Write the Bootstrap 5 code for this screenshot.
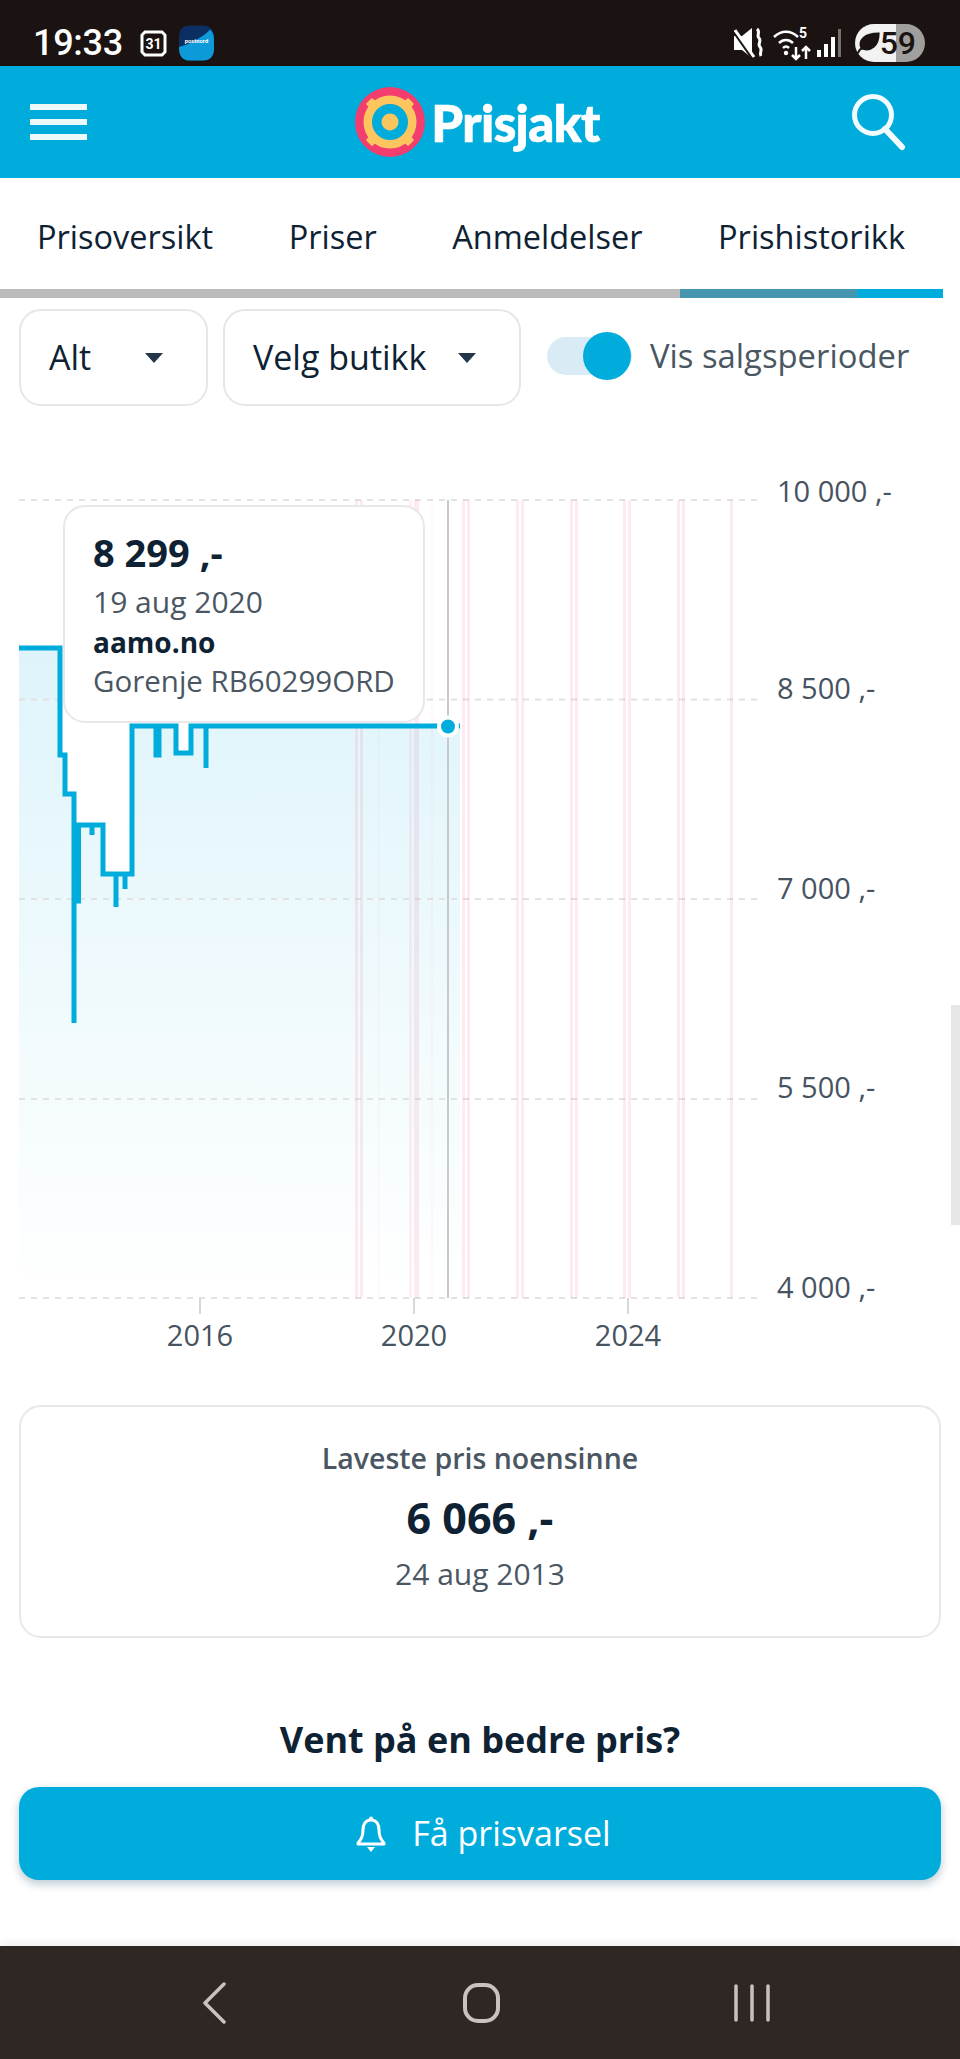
<!DOCTYPE html>
<html lang="nb">
<head>
  <meta charset="UTF-8" />
  <meta name="viewport" content="width=device-width, initial-scale=1.0"/>
  <title>Prisjakt | Prishistorikk</title>
  <link href="https://cdn.jsdelivr.net/npm/bootstrap@5.3.0/dist/css/bootstrap.min.css" rel="stylesheet"/>
  <style>
    body {
      font-family: "Open Sans", "Noto Sans", sans-serif;
      color: #0e2233;
      background-color: #fff;
    }
    .page-wrap {
      min-height: 2059px;
      position: relative;
      overflow: hidden;
    }
    .status-bar {
      height: 66px;
      background-color: #1a1311;
      color: #fff;
      padding: 20px 35px 0 33px;
      font-family: Roboto, sans-serif;
    }
    .status-time {
      font-size: 36px;
      font-weight: 500;
      letter-spacing: -.3px;
      margin-right: 17px;
    }
    .battery-pill {
      width: 70px;
      height: 38px;
      border-radius: 19px;
      background: linear-gradient(90deg, #f2f2f2 58%, #a19f9d 58%);
      color: #1a1311;
      font-size: 32px;
      font-weight: 500;
      margin-left: 13px;
      padding-right: 9px;
    }
    .app-head {
      height: 112px;
      background-color: #00acdc;
      padding: 0 51px 0 30px;
    }
    .burger-bar {
      display: block;
      width: 57px;
      height: 6px;
      background-color: #eef9fc;
      margin-bottom: 9px;
    }
    .burger-bar:last-child { margin-bottom: 0; }
    .logo-wrap { margin-left: 21px; }
    .logo-text {
      font-family: Lato, sans-serif;
      font-size: 51px;
      font-weight: 900;
      color: #fff;
      letter-spacing: -.6px;
      line-height: 1;
      margin-left: 6px;
      -webkit-text-stroke: .7px #fff;
    }
    .tab-row {
      height: 111px;
      padding: 8px 55px 0 37px;
      font-size: 32.5px;
      color: #0e2233;
    }
    .tab-strip { height: 9px; }
    .strip-grey { width: 680px; background-color: #bbb; }
    .strip-dark { width: 177px; background-color: #4696b0; }
    .strip-blue { width: 86px; background-color: #00acdc; }
    .filter-row { padding: 11px 0 0 19px; height: 108px; }
    .filter-btn {
      height: 97px;
      border: 2px solid #e4e6e8;
      border-radius: 22px;
      font-size: 34px;
      color: #0e2233;
      background: #fff;
      padding: 0 43px 0 28px;
      display: flex;
      align-items: center;
      justify-content: space-between;
    }
    .filter-btn::after {
      border-top: 10px solid #24374a;
      border-right: 9px solid transparent;
      border-left: 9px solid transparent;
      border-bottom: 0;
      margin: 0;
    }
    .btn-all { width: 189px; }
    .btn-shop { width: 298px; margin-left: 15px; }
    .sale-toggle {
      position: relative;
      width: 85px;
      height: 38px;
      border-radius: 19px;
      background-color: #d9ecf5;
      margin-left: 26px;
    }
    .sale-knob {
      position: absolute;
      right: 1px;
      top: -5px;
      width: 48px;
      height: 48px;
      border-radius: 50%;
      background-color: #00acdc;
    }
    .sale-label { font-size: 32.8px; color: #4a5763; margin-left: 18px; white-space: nowrap; }
    .chart-wrap { position: relative; height: 999px; }
    .chart-wrap svg { display: block; }
    .axis-text { font-family: "Open Sans", sans-serif; font-size: 29px; fill: #47535f; }
    .price-tip {
      position: absolute;
      left: 63px;
      top: 99px;
      width: 362px;
      height: 218px;
      background-color: #fff;
      border: 2px solid #e8e8ea;
      border-radius: 22px;
      padding: 0 28px;
    }
    .tip-price { font-size: 38px; font-weight: 700; line-height: 44px; margin-top: 23px; }
    .tip-date { font-size: 30px; color: #4a5763; line-height: 38px; margin-top: 9px; }
    .tip-shop { font-size: 28px; font-weight: 700; line-height: 38px; margin-top: 2px; }
    .tip-model { font-size: 29.5px; color: #4a5763; line-height: 38px; margin-top: 1px; white-space: nowrap; }
    .low-card {
      height: 233px;
      margin: 0 19px;
      border: 2px solid #e8e8ea;
      border-radius: 22px;
    }
    .low-title { font-size: 28.5px; font-weight: 600; color: #4a5763; line-height: 36px; margin-top: 33px; }
    .low-price { font-size: 43px; font-weight: 700; line-height: 50px; margin-top: 17px; }
    .low-date { font-size: 30px; color: #4a5763; line-height: 38px; margin-top: 12px; }
    .wait-title { font-size: 36px; font-weight: 700; line-height: 48px; margin: 78px 0 23px; text-align: center; }
    .alert-btn {
      display: flex;
      height: 93px;
      margin: 0 19px;
      width: 922px;
      border-radius: 20px;
      background-color: #00acdc;
      color: #fff;
      font-size: 34px;
      font-weight: 500;
      border: 0;
      padding-left: 19px;
      box-shadow: 0 4px 10px rgba(0,60,90,.28);
    }
    .alert-btn:hover, .alert-btn:active { background-color: #00acdc; color: #fff; }
    .bell-icon { margin-right: 26px; }
    .nav-foot {
      height: 113px;
      margin-top: auto;
      background-color: #2f2724;
      padding: 0 189px 0 200px;
      box-shadow: 0 -3px 10px rgba(0,0,0,.07);
    }
    .scroll-thumb {
      position: absolute;
      right: 0;
      top: 1005px;
      width: 9px;
      height: 220px;
      background-color: #e6e6e6;
    }
  </style>
</head>
<body>
  <div class="page-wrap d-flex flex-column">

    <!-- Status bar -->
    <div class="status-bar d-flex align-items-center flex-shrink-0">
      <span class="status-time">19:33</span>
      <svg width="27" height="27" viewBox="0 0 27 27" class="me-2">
        <path d="M5 2h17l3 3v17l-3 3H5l-3-3V5z" fill="none" stroke="#fff" stroke-width="3"/>
        <text x="13.5" y="19" font-size="14" font-weight="700" fill="#fff" text-anchor="middle" font-family="Roboto">31</text>
      </svg>
      <svg width="35" height="38" viewBox="0 0 36 38" class="ms-1">
        <path d="M11 1h14c7 0 11 5 11 12v12c0 8-4 12-11 12H11C4 37 0 33 0 25V13C0 5 4 1 11 1z" fill="#0c2f63"/>
        <path d="M0 23C8 21 24 14 32 5c3 3 4 6 4 10v10c0 8-4 12-11 12H11C4 37 0 33 0 23z" fill="#0c9ad9"/>
        <text x="18" y="19" font-size="6" font-weight="700" fill="#fff" text-anchor="middle" font-family="Roboto">postnord</text>
      </svg>
      <div class="ms-auto d-flex align-items-center">
        <svg width="30" height="32" viewBox="0 0 30 32" class="me-1">
          <path d="M0 9h8l10-8v30L8 23H0z" fill="#fff"/>
          <path d="M0 5l19 27" stroke="#1a1311" stroke-width="3"/>
          <path d="M1 3l19 27" stroke="#fff" stroke-width="3"/>
          <path d="M23 2c4 3-1 6 2 9s-2 6 1 9-1 5 1 9" fill="none" stroke="#fff" stroke-width="3"/>
        </svg>
        <svg width="40" height="36" viewBox="0 0 40 36" class="ms-1">
          <path d="M2 12c7-7 17-7 24 0M7 18c4-4 10-4 14 0M11 23c2-2 4-2 6 0" fill="none" stroke="#fff" stroke-width="2.5"/>
          <circle cx="14" cy="28" r="2.2" fill="#fff"/>
          <text x="27" y="13" font-size="14" font-weight="700" fill="#fff" font-family="Roboto">5</text>
          <path d="M24 22v12M20 30l4 4 4-4M34 34V22M30 26l4-4 4 4" fill="none" stroke="#fff" stroke-width="2.5"/>
        </svg>
        <svg width="26" height="28" viewBox="0 0 26 28" class="ms-1">
          <rect x="1" y="21" width="4" height="7" fill="#fff"/>
          <rect x="8" y="15" width="4" height="13" fill="#fff"/>
          <rect x="15" y="8" width="4" height="20" fill="#fff"/>
          <rect x="22" y="0" width="3" height="28" fill="#77716e"/>
        </svg>
        <div class="battery-pill d-flex align-items-center justify-content-end">
          <svg width="26" height="24" viewBox="0 0 26 24">
            <path d="M3 23c1-3 3-5 5-7M7 18C3 9 10 2 25 2c0 13-8 19-18 16z" fill="#1a1311" stroke="#1a1311" stroke-width="2"/>
          </svg>
          <span>59</span>
        </div>
      </div>
    </div>

    <!-- Top bar -->
    <div class="app-head d-flex align-items-center justify-content-between flex-shrink-0">
      <div>
        <span class="burger-bar"></span>
        <span class="burger-bar"></span>
        <span class="burger-bar"></span>
      </div>
      <div class="logo-wrap d-flex align-items-center">
        <svg width="70" height="70" viewBox="0 0 70 70">
          <circle cx="35" cy="35" r="35" fill="#f23d6e"/>
          <circle cx="35" cy="35" r="22" fill="none" stroke="#fdc55d" stroke-width="9"/>
          <g fill="#fdc55d">
            <rect x="12.5" y="12.5" width="9" height="9" transform="rotate(45 17 17)" rx="1.5"/>
            <rect x="48.5" y="12.5" width="9" height="9" transform="rotate(45 53 17)" rx="1.5"/>
            <rect x="12.5" y="48.5" width="9" height="9" transform="rotate(45 17 53)" rx="1.5"/>
            <rect x="48.5" y="48.5" width="9" height="9" transform="rotate(45 53 53)" rx="1.5"/>
          </g>
          <circle cx="35" cy="35" r="18" fill="#00acdc"/>
          <circle cx="35" cy="35" r="8.5" fill="#fdc55d"/>
        </svg>
        <span class="logo-text">Prisjakt</span>
      </div>
      <svg width="62" height="62" viewBox="0 0 62 62">
        <circle cx="26" cy="24" r="18.5" fill="none" stroke="#f2fbfe" stroke-width="5"/>
        <path d="M38 38l17 18" stroke="#f2fbfe" stroke-width="6" stroke-linecap="round"/>
      </svg>
    </div>

    <!-- Tabs -->
    <div class="tab-row d-flex align-items-center justify-content-between flex-shrink-0">
      <span>Prisoversikt</span>
      <span>Priser</span>
      <span>Anmeldelser</span>
      <span>Prishistorikk</span>
    </div>
    <div class="tab-strip d-flex flex-shrink-0">
      <div class="strip-grey"></div>
      <div class="strip-dark"></div>
      <div class="strip-blue"></div>
    </div>

    <!-- Filters -->
    <div class="filter-row d-flex align-items-start flex-shrink-0">
      <button class="btn dropdown-toggle filter-btn btn-all" type="button">Alt</button>
      <button class="btn dropdown-toggle filter-btn btn-shop" type="button">Velg butikk</button>
      <div class="d-flex align-items-center h-100 pb-1">
        <div class="sale-toggle"><span class="sale-knob"></span></div>
        <span class="sale-label">Vis salgsperioder</span>
      </div>
    </div>

    <!-- Chart -->
    <div class="chart-wrap flex-shrink-0">
      <svg id="priceChart" width="960" height="999" viewBox="0 405 960 999"></svg>
      <div class="price-tip">
        <div class="tip-price">8 299 ,-</div>
        <div class="tip-date">19 aug 2020</div>
        <div class="tip-shop">aamo.no</div>
        <div class="tip-model">Gorenje RB60299ORD</div>
      </div>
    </div>

    <!-- Lowest price -->
    <div class="low-card text-center flex-shrink-0">
      <div class="low-title">Laveste pris noensinne</div>
      <div class="low-price">6 066 ,-</div>
      <div class="low-date">24 aug 2013</div>
    </div>

    <div class="wait-title">Vent på en bedre pris?</div>
    <button class="btn alert-btn align-items-center justify-content-center flex-shrink-0" type="button">
      <svg width="30" height="38" viewBox="0 0 30 38" class="bell-icon">
        <circle cx="15" cy="3.5" r="2" fill="#fff"/>
        <path d="M15 5c-6 0-8 5-8 10 0 6-2 10-5 13v1h26v-1c-3-3-5-7-5-13 0-5-2-10-8-10z" fill="none" stroke="#fff" stroke-width="3" stroke-linejoin="round"/>
        <path d="M11 32h8l-4 5z" fill="#fff"/>
      </svg>
      Få prisvarsel
    </button>

    <!-- Android nav -->
    <div class="nav-foot d-flex align-items-center justify-content-between">
      <svg width="30" height="42" viewBox="0 0 30 42">
        <path d="M24 2L5 21l19 19" fill="none" stroke="#c9c3c0" stroke-width="3.5" stroke-linecap="round" stroke-linejoin="round"/>
      </svg>
      <svg width="40" height="40" viewBox="0 0 40 40">
        <rect x="3" y="2" width="33" height="36" rx="13" fill="none" stroke="#c9c3c0" stroke-width="4"/>
      </svg>
      <svg width="38" height="38" viewBox="0 0 38 38">
        <path d="M3 2v34M19 2v34M35 2v34" stroke="#c9c3c0" stroke-width="3.5" stroke-linecap="round"/>
      </svg>
    </div>

    <div class="scroll-thumb"></div>
  </div>

  <script>
    // chart is drawn from data, coordinates are page pixels (see viewBox)
    const gridY = [499, 698.5, 898, 1098, 1297];
    const labels = [[501, '10 000 ,-'], [698, '8 500 ,-'], [898, '7 000 ,-'], [1097, '5 500 ,-'], [1297, '4 000 ,-']];
    const years = [[200, '2016'], [414, '2020'], [628, '2024']];
    // x, width, opacity of the sale periods
    const bands = [[355, 3, .1], [360, 3, .1], [378, 2, .03], [409, 3, .07], [414, 5, .1], [431, 2, .03], [462, 3, .1], [467, 3, .1],
                   [516, 3, .1], [521, 3, .1], [570, 3, .1], [575, 3, .1], [623, 3, .1], [628, 3, .1], [677, 3, .1], [682, 3, .1], [730, 3, .1]];
    const step = 'M19 647H60V754H65V793H74V1022V900H78.5V824H92V834V824H103V873H116V906V873H125V888V873H132V725H156V754H159V725H176V752H191V725H206V767V725H460';

    let svg = `<defs><linearGradient id="areaFill" gradientUnits="userSpaceOnUse" x1="0" y1="647" x2="0" y2="1297">
      <stop offset="0" stop-color="#00acdc" stop-opacity=".13"/><stop offset="1" stop-color="#00acdc" stop-opacity="0"/></linearGradient></defs>`;
    svg += `<path d="${step}V1297H19Z" fill="url(#areaFill)"/>`;
    gridY.forEach(y => {
      svg += `<line x1="19" x2="760" y1="${y}" y2="${y}" stroke="#e2e2e2" stroke-width="2" stroke-dasharray="6 6"/>`;
    });
    labels.forEach(l => {
      svg += `<text class="axis-text" x="777" y="${l[0]}">${l[1]}</text>`;
    });
    bands.forEach(b => {
      svg += `<rect x="${b[0]}" y="499" width="${b[1]}" height="798" fill="#f23d6e" opacity="${b[2]}"/>`;
    });
    years.forEach(t => {
      svg += `<line x1="${t[0]}" x2="${t[0]}" y1="1297" y2="1313" stroke="#d8d8d8" stroke-width="2"/>`;
      svg += `<text class="axis-text" x="${t[0]}" y="1345" text-anchor="middle">${t[1]}</text>`;
    });
    svg += `<line x1="448" x2="448" y1="499" y2="1297" stroke="#c6c8ca" stroke-width="2"/>`;
    svg += `<path d="${step}" fill="none" stroke="#00acdc" stroke-width="5"/>`;
    svg += `<circle cx="448" cy="725.5" r="11" fill="#fff"/><circle cx="448" cy="725.5" r="7" fill="#00acdc"/>`;
    document.getElementById('priceChart').innerHTML = svg;
  </script>
  <script src="https://cdn.jsdelivr.net/npm/bootstrap@5.3.0/dist/js/bootstrap.bundle.min.js"></script>
</body>
</html>
